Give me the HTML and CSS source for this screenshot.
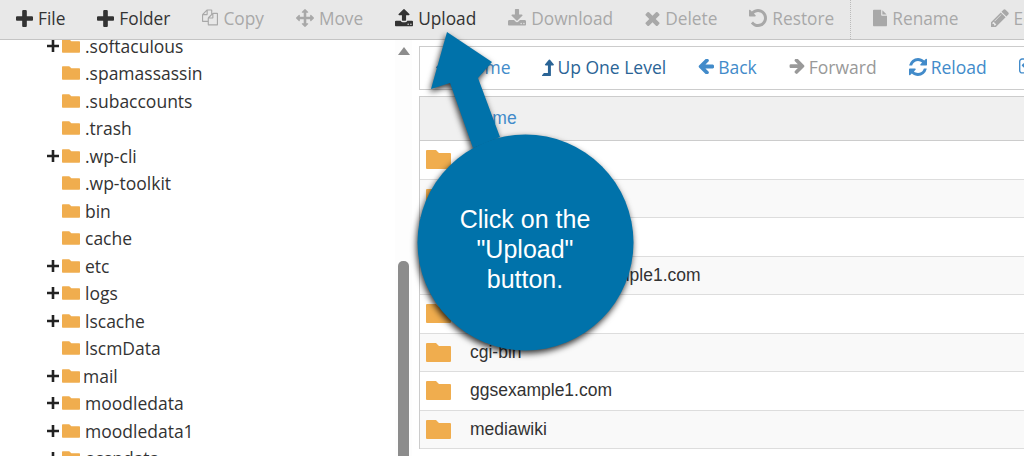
FILE: index.html
```html
<!DOCTYPE html>
<html lang="en">
<head>
<meta charset="utf-8">
<title>File Manager</title>
<link rel="stylesheet" href="styles.css">
</head>
<body>
<svg class="defs" xmlns="http://www.w3.org/2000/svg">
<symbol id="i-plus" viewBox="192 128 1408 1408"><path d="M1600 736v192q0 40-28 68t-68 28h-416v416q0 40-28 68t-68 28h-192q-40 0-68-28t-28-68v-416h-416q-40 0-68-28t-28-68v-192q0-40 28-68t68-28h416v-416q0-40 28-68t68-28h192q40 0 68 28t28 68v416h416q40 0 68 28t28 68z"/></symbol>
<symbol id="i-tplus" viewBox="0 0 12 12"><path d="M4.7 0h2.6v4.7H12v2.6H7.3V12H4.7V7.3H0V4.7h4.7z"/></symbol>
<symbol id="i-copy" viewBox="0 128 1792 1664"><path d="M1696 384q40 0 68 28t28 68v1216q0 40-28 68t-68 28h-960q-40 0-68-28t-28-68v-288h-544q-40 0-68-28t-28-68v-672q0-40 20-88t48-76l408-408q28-28 76-48t88-20h416q40 0 68 28t28 68v328q68-40 128-40h416zm-544 213l-299 299h299v-299zm-640-384l-299 299h299v-299zm196 647l316-316v-416h-384v416q0 40-28 68t-68 28h-416v640h512v-256q0-40 20-88t48-76zm956 804v-1152h-384v416q0 40-28 68t-68 28h-416v640h896z"/></symbol>
<symbol id="i-move" viewBox="0 0 1792 1792"><path d="M1792 896q0 26-19 45l-256 256q-19 19-45 19t-45-19-19-45v-128h-384v384h128q26 0 45 19t19 45-19 45l-256 256q-19 19-45 19t-45-19l-256-256q-19-19-19-45t19-45 45-19h128v-384h-384v128q0 26-19 45t-45 19-45-19l-256-256q-19-19-19-45t19-45l256-256q19-19 45-19t45 19 19 45v128h384v-384h-128q-26 0-45-19t-19-45 19-45l256-256q19-19 45-19t45 19l256 256q19 19 19 45t-19 45-45 19h-128v384h384v-128q0-26 19-45t45-19 45 19l256 256q19 19 19 45z"/></symbol>
<symbol id="i-upload" viewBox="64 128 1664 1536"><path d="M1344 1472q0-26-19-45t-45-19-45 19-19 45 19 45 45 19 45-19 19-45zm256 0q0-26-19-45t-45-19-45 19-19 45 19 45 45 19 45-19 19-45zm128-224v320q0 40-28 68t-68 28h-1472q-40 0-68-28t-28-68v-320q0-40 28-68t68-28h427q21 56 70.5 92t110.5 36h256q61 0 110.5-36t70.5-92h427q40 0 68 28t28 68zm-325-648q-17 40-59 40h-256v448q0 26-19 45t-45 19h-256q-26 0-45-19t-19-45v-448h-256q-42 0-59-40-17-39 14-69l448-448q18-19 45-19t45 19l448 448q31 30 14 69z"/></symbol>
<symbol id="i-download" viewBox="64 128 1664 1408"><path d="M1344 1344q0-26-19-45t-45-19-45 19-19 45 19 45 45 19 45-19 19-45zm256 0q0-26-19-45t-45-19-45 19-19 45 19 45 45 19 45-19 19-45zm128-224v320q0 40-28 68t-68 28h-1472q-40 0-68-28t-28-68v-320q0-40 28-68t68-28h465l135 136q58 56 136 56t136-56l136-136h464q40 0 68 28t28 68zm-325-569q17 41-14 70l-448 448q-18 19-45 19t-45-19l-448-448q-31-29-14-70 17-39 59-39h256v-448q0-26 19-45t45-19h256q26 0 45 19t19 45v448h256q42 0 59 39z"/></symbol>
<symbol id="i-times" viewBox="266 202 1260 1352"><path d="M1490 1322q0 40-28 68l-136 136q-28 28-68 28t-68-28l-294-294-294 294q-28 28-68 28t-68-28l-136-136q-28-28-28-68t28-68l294-294-294-294q-28-28-28-68t28-68l136-136q28-28 68-28t68 28l294 294 294-294q28-28 68-28t68 28l136 136q28 28 28 68t-28 68l-294 294 294 294q28 28 28 68z"/></symbol>
<symbol id="i-undo" viewBox="128 128 1536 1536"><path d="M1664 896q0 156-61 298t-164 245-245 164-298 61q-172 0-327-72.5t-264-204.5q-7-10-6.5-22.5t8.5-20.5l137-138q10-9 25-9 16 2 23 12 73 95 179 147t225 52q104 0 198.5-40.5t163.5-109.5 109.5-163.5 40.5-198.5-40.5-198.5-109.5-163.5-163.5-109.5-198.5-40.5q-98 0-188 35.5t-160 101.5l137 138q31 30 14 69-17 40-59 40h-448q-26 0-45-19t-19-45v-448q0-42 40-59 39-17 69 14l130 129q107-101 244.5-156.5t284.5-55.5q156 0 298 61t245 164 164 245 61 298z"/></symbol>
<symbol id="i-file" viewBox="128 0 1536 1792"><path d="M1152 512v-472q22 14 36 28l408 408q14 14 28 36h-472zm-128 32q0 40 28 68t68 28h544v1056q0 40-28 68t-68 28h-1344q-40 0-68-28t-28-68v-1600q0-40 28-68t68-28h800v544z"/></symbol>
<symbol id="i-pencil" viewBox="128 128 1536 1536"><path d="M491 1536l91-91-235-235-91 91v107h128v128h107zm523-928q0-22-22-22-10 0-17 7l-542 542q-7 7-7 17 0 22 22 22 10 0 17-7l542-542q7-7 7-17zm-54-192l416 416-832 832h-416v-416zm683 96q0 53-37 90l-166 166-416-416 166-165q36-38 90-38 53 0 91 38l235 234q37 39 37 91z"/></symbol>
<symbol id="i-home" viewBox="90 200 1612 1340"><path d="M1472 992v480q0 26-19 45t-45 19h-384v-384h-256v384h-384q-26 0-45-19t-19-45v-480q0-1 .5-3t.5-3l575-474 575 474q1 2 1 6zm223-69l-62 74q-8 9-21 11h-3q-13 0-21-7l-692-577-692 577q-12 8-24 7-13-2-21-11l-62-74q-8-10-7-23.5t11-21.5l719-599q32-26 76-26t76 26l244 204v-195q0-14 9-23t23-9h192q14 0 23 9t9 23v408l219 182q10 8 11 21.5t-7 23.5z"/></symbol>
<symbol id="i-up" viewBox="380 0 1030 1536"><path d="M1395 603q-18 37-58 37h-192v864q0 14-9 23t-23 9h-704q-21 0-29-18-8-20 4-35l160-192q9-11 25-11h320v-640h-192q-40 0-58-37-17-37 9-68l320-384q18-22 49-22t49 22l320 384q27 32 9 68z"/></symbol>
<symbol id="i-left" viewBox="128 256 1536 1408"><path d="M1664 896v128q0 53-32.5 90.5t-84.5 37.5h-704l293 294q38 36 38 90t-38 90l-75 76q-37 37-90 37-52 0-91-37l-651-652q-37-37-37-90 0-52 37-91l651-650q38-38 91-38 52 0 90 38l75 74q38 38 38 91t-38 91l-293 293h704q52 0 84.5 37.5t32.5 90.5z"/></symbol>
<symbol id="i-right" viewBox="128 256 1472 1488"><path d="M1600 960q0 54-37 91l-651 651q-39 37-91 37-51 0-90-37l-75-75q-38-38-38-91t38-91l293-293h-704q-52 0-84.5-37.5t-32.5-90.5v-128q0-53 32.5-90.5t84.5-37.5h704l-293-294q-38-36-38-90t38-90l75-75q38-38 90-38 53 0 91 38l651 651q37 35 37 90z"/></symbol>
<symbol id="i-reload" viewBox="128 128 1536 1536"><path d="M1639 1056q0 5-1 7-64 268-268 434.5t-478 166.5q-146 0-282.5-55t-243.5-157l-129 129q-19 19-45 19t-45-19-19-45v-448q0-26 19-45t45-19h448q26 0 45 19t19 45-19 45l-137 137q71 66 161 102t187 36q134 0 250-65t186-179q11-17 53-117 8-23 30-23h192q13 0 22.5 9.5t9.5 22.5zm25-800v448q0 26-19 45t-45 19h-448q-26 0-45-19t-19-45 19-45l138-138q-148-137-349-137-134 0-250 65t-186 179q-11 17-53 117-8 23-30 23h-199q-13 0-22.5-9.5t-9.5-22.5v-7q65-268 270-434.5t480-166.5q146 0 284 55.5t245 156.5l130-129q19-19 45-19t45 19 19 45z"/></symbol>
<symbol id="i-check" viewBox="64 128 1664 1600"><path d="M1472 930v318q0 119-84.5 203.5t-203.5 84.5h-832q-119 0-203.5-84.5t-84.5-203.5v-832q0-119 84.5-203.5t203.5-84.5h832q63 0 117 25 15 7 18 23 3 17-9 29l-49 49q-10 10-23 10-3 0-9-2-23-6-45-6h-832q-66 0-113 47t-47 113v832q0 66 47 113t113 47h832q66 0 113-47t47-113v-254q0-13 9-22l64-64q10-10 23-10 6 0 12 3 20 8 20 29zm231-489l-814 814q-24 24-57 24t-57-24l-430-430q-24-24-24-57t24-57l110-110q24-24 57-24t57 24l263 263 647-647q24-24 57-24t57 24l110 110q24 24 24 57t-24 57z"/></symbol>
<symbol id="i-folder" viewBox="0 0 25 19"><path d="M1 0h9l3 3h11a1 1 0 0 1 1 1v14a1 1 0 0 1-1 1H1a1 1 0 0 1-1-1V1a1 1 0 0 1 1-1z"/></symbol>
</svg>

<header class="toolbar">
  <span class="tool"><svg class="ic ic-plus"><use href="#i-plus"/></svg>File</span>
  <span class="tool"><svg class="ic ic-plus"><use href="#i-plus"/></svg>Folder</span>
  <span class="tool off"><svg class="ic ic-copy"><use href="#i-copy"/></svg>Copy</span>
  <span class="tool off"><svg class="ic ic-move"><use href="#i-move"/></svg>Move</span>
  <span class="tool"><svg class="ic ic-move"><use href="#i-upload"/></svg>Upload</span>
  <span class="tool off"><svg class="ic ic-move"><use href="#i-download"/></svg>Download</span>
  <span class="tool off"><svg class="ic ic-times"><use href="#i-times"/></svg>Delete</span>
  <span class="tool off"><svg class="ic ic-move"><use href="#i-undo"/></svg>Restore</span>
  <span class="sep"></span>
  <span class="tool off"><svg class="ic ic-file"><use href="#i-file"/></svg>Rename</span>
  <span class="tool off"><svg class="ic ic-move"><use href="#i-pencil"/></svg>Edit</span>
</header>

<main class="main">
  <nav class="tree">
    <div class="node"><span class="tog"><svg class="ic-tog"><use href="#i-tplus"/></svg></span><svg class="fold"><use href="#i-folder"/></svg><span class="name">.softaculous</span></div>
    <div class="node"><span class="tog"></span><svg class="fold"><use href="#i-folder"/></svg><span class="name">.spamassassin</span></div>
    <div class="node"><span class="tog"></span><svg class="fold"><use href="#i-folder"/></svg><span class="name">.subaccounts</span></div>
    <div class="node"><span class="tog"></span><svg class="fold"><use href="#i-folder"/></svg><span class="name">.trash</span></div>
    <div class="node"><span class="tog"><svg class="ic-tog"><use href="#i-tplus"/></svg></span><svg class="fold"><use href="#i-folder"/></svg><span class="name">.wp-cli</span></div>
    <div class="node"><span class="tog"></span><svg class="fold"><use href="#i-folder"/></svg><span class="name">.wp-toolkit</span></div>
    <div class="node"><span class="tog"></span><svg class="fold"><use href="#i-folder"/></svg><span class="name">bin</span></div>
    <div class="node"><span class="tog"></span><svg class="fold"><use href="#i-folder"/></svg><span class="name">cache</span></div>
    <div class="node"><span class="tog"><svg class="ic-tog"><use href="#i-tplus"/></svg></span><svg class="fold"><use href="#i-folder"/></svg><span class="name">etc</span></div>
    <div class="node"><span class="tog"><svg class="ic-tog"><use href="#i-tplus"/></svg></span><svg class="fold"><use href="#i-folder"/></svg><span class="name">logs</span></div>
    <div class="node"><span class="tog"><svg class="ic-tog"><use href="#i-tplus"/></svg></span><svg class="fold"><use href="#i-folder"/></svg><span class="name">lscache</span></div>
    <div class="node"><span class="tog"></span><svg class="fold"><use href="#i-folder"/></svg><span class="name">lscmData</span></div>
    <div class="node"><span class="tog"><svg class="ic-tog"><use href="#i-tplus"/></svg></span><svg class="fold"><use href="#i-folder"/></svg><span class="name tight">mail</span></div>
    <div class="node"><span class="tog"><svg class="ic-tog"><use href="#i-tplus"/></svg></span><svg class="fold"><use href="#i-folder"/></svg><span class="name">moodledata</span></div>
    <div class="node"><span class="tog"><svg class="ic-tog"><use href="#i-tplus"/></svg></span><svg class="fold"><use href="#i-folder"/></svg><span class="name">moodledata1</span></div>
    <div class="node"><span class="tog"><svg class="ic-tog"><use href="#i-tplus"/></svg></span><svg class="fold"><use href="#i-folder"/></svg><span class="name">ossndata</span></div>
  </nav>

  <div class="scrollbar">
    <span class="arrow-up"></span>
    <span class="thumb"></span>
  </div>

  <section class="panel">
    <div class="navbar">
      <span class="nav-item home"><svg class="ic ic-home"><use href="#i-home"/></svg>Home</span>
      <span class="nav-item dark"><svg class="ic ic-up"><use href="#i-up"/></svg>Up One Level</span>
      <span class="nav-item"><svg class="ic ic-arrow"><use href="#i-left"/></svg>Back</span>
      <span class="nav-item grey"><svg class="ic ic-arrow"><use href="#i-right"/></svg>Forward</span>
      <span class="nav-item"><svg class="ic ic-move"><use href="#i-reload"/></svg>Reload</span>
      <span class="nav-item"><svg class="ic ic-move"><use href="#i-check"/></svg>Select All</span>
    </div>
    <div class="table">
      <div class="thead">Name</div>
      <div class="row"><svg class="row-fold"><use href="#i-folder"/></svg>access</div>
      <div class="row"><svg class="row-fold"><use href="#i-folder"/></svg>assets</div>
      <div class="row"><svg class="row-fold"><use href="#i-folder"/></svg>backups</div>
      <div class="row"><svg class="row-fold"><use href="#i-folder"/></svg>addon-domain.example1.com</div>
      <div class="row"><svg class="row-fold"><use href="#i-folder"/></svg>cache</div>
      <div class="row"><svg class="row-fold"><use href="#i-folder"/></svg>cgi-bin</div>
      <div class="row"><svg class="row-fold"><use href="#i-folder"/></svg>ggsexample1.com</div>
      <div class="row"><svg class="row-fold"><use href="#i-folder"/></svg>mediawiki</div>
    </div>
  </section>
</main>

<aside class="callout">
  <svg class="callout-shape" xmlns="http://www.w3.org/2000/svg" viewBox="0 0 1024 456">
    <path d="M447 32L492 62L478 78L500 137L473 148L450 83L431 89Z"/>
    <circle cx="525.5" cy="242.5" r="108"/>
  </svg>
  <p class="callout-text">Click on the<br>"Upload"<br>button.</p>
</aside>
</body>
</html>
```
FILE: styles.css
```css
* { box-sizing: border-box; }
html, body { margin: 0; padding: 0; }
body {
  position: relative;
  width: 1024px;
  height: 456px;
  overflow: hidden;
  background: #fff;
  color: #333;
  font-family: "Open Sans", sans-serif;
}
.defs { display: none; }
svg { fill: currentColor; flex: none; }

.toolbar {
  display: flex;
  align-items: center;
  gap: 32px;
  height: 40px;
  padding: 0 0 3px 16px;
  background: #e8e8e8;
  border-bottom: 1px solid #c4c4c4;
  font-size: 17.3px;
  white-space: nowrap;
}
.tool { display: flex; align-items: center; gap: 5px; color: #333; flex: none; }
.tool.off { color: #a8a8a8; }
.sep { width: 0; height: 39px; margin: 3px -10px 0 -16px; border-left: 1px dotted #bbb; flex: none; }
.ic-plus { width: 17px; height: 17px; }
.ic-copy { width: 16px; height: 18px; }
.ic-move { width: 18px; height: 18px; }
.ic-times { width: 15px; height: 16px; }
.ic-file { width: 14px; height: 18px; }
.ic-home { width: 16px; height: 14px; margin-right: 5px; }
.ic-up { width: 12px; height: 18px; margin-right: -1px; }
.ic-arrow { width: 16px; height: 15px; }

.main { display: flex; height: 416px; overflow: hidden; }
.tree {
  flex: none;
  width: 395px;
  margin-top: -8px;
  padding-left: 47px;
  font-size: 17.5px;
  color: #333;
}
.node { display: flex; align-items: center; height: 27.5px; }
.tog { display: flex; flex: none; width: 12px; margin-right: 3px; }
.ic-tog { width: 12px; height: 12px; color: #222; }
.fold { width: 18px; height: 14px; color: #f0ad4e; }
.name { margin-left: 5px; }
.name.tight { margin-left: 3px; }

.scrollbar {
  flex: none;
  width: 17px;
  display: flex;
  flex-direction: column;
  align-items: center;
  background: #fdfdfd;
}
.arrow-up {
  flex: none;
  margin-top: 7px;
  border-left: 6.5px solid transparent;
  border-right: 6.5px solid transparent;
  border-bottom: 8px solid #8c8c8c;
}
.thumb {
  flex: 1;
  width: 11px;
  margin-top: 206px;
  background: #8c8c8c;
  border-radius: 5px 5px 0 0;
}

.panel {
  flex: none;
  width: 700px;
  margin-left: 7px;
  padding-top: 6px;
}
.navbar {
  display: flex;
  align-items: center;
  gap: 32px;
  height: 44px;
  padding: 0 0 3px 16px;
  border: 1px solid #ccc;
  font-size: 17.5px;
  color: #428bca;
  white-space: nowrap;
}
.nav-item { display: flex; align-items: center; gap: 4px; flex: none; }
.nav-item.dark { color: #2a6496; }
.nav-item.grey { color: #999; }

.table { margin-top: 6px; border-left: 1px solid #ccc; font-family: "Liberation Sans", sans-serif; font-size: 17.5px; }
.thead {
  display: flex;
  align-items: center;
  height: 45px;
  padding-left: 50px;
  background: #f0f0f0;
  border-top: 1px solid #ccc;
  border-bottom: 1px solid #ccc;
  color: #428bca;
}
.row {
  display: flex;
  align-items: center;
  gap: 19px;
  height: 38.5px;
  padding-left: 6px;
  border-bottom: 1px solid #ddd;
  white-space: nowrap;
}
.row:nth-child(odd) { background: #f9f9f9; }
.row-fold { width: 25px; height: 19px; color: #f0ad4e; }

.callout { position: absolute; inset: 0; }
.callout-shape {
  position: absolute;
  left: 0;
  top: 0;
  width: 1024px;
  height: 456px;
  fill: #0072aa;
  filter: drop-shadow(-1px 3px 3px rgba(0, 0, 0, 0.8));
}
.callout-text {
  position: absolute;
  left: 417px;
  top: 204px;
  width: 216px;
  margin: 0;
  color: #fff;
  font-family: "Liberation Sans", sans-serif;
  font-size: 25px;
  line-height: 30px;
  text-align: center;
}
```
